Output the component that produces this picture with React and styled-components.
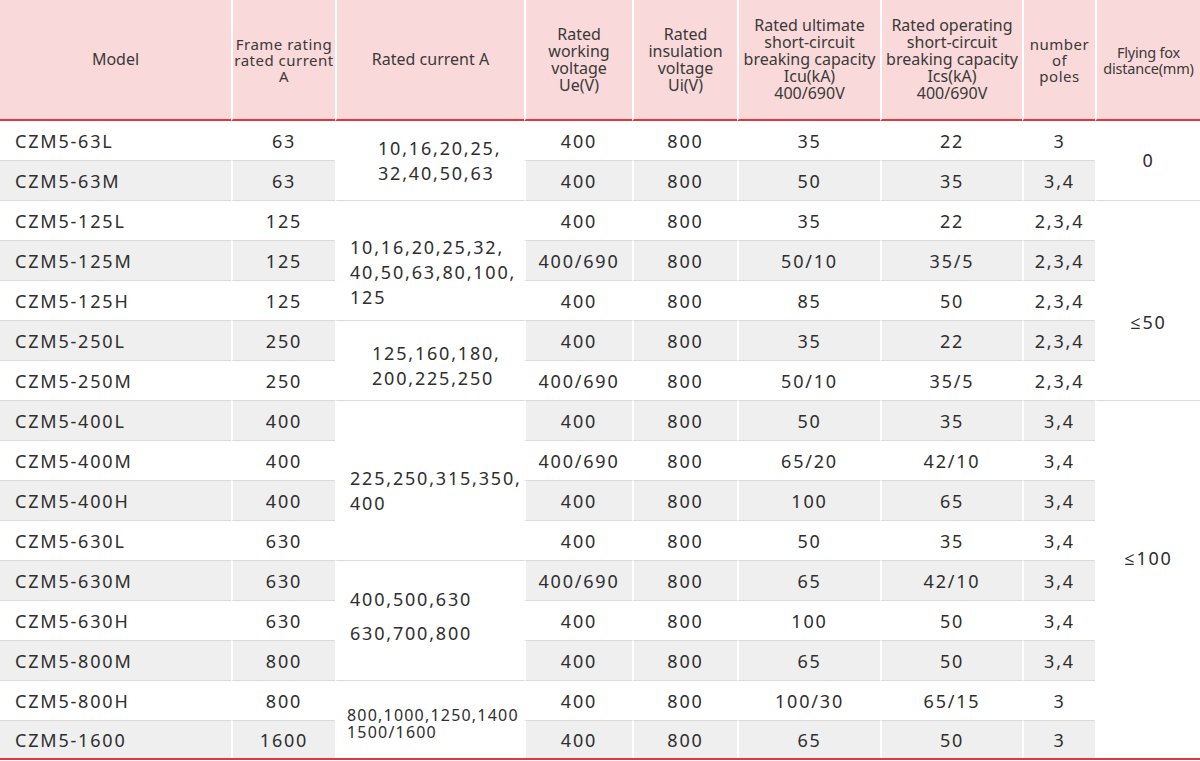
import React from "react";
import styled, { createGlobalStyle } from "styled-components";

const GlobalStyle = createGlobalStyle`
  html, body { margin: 0; padding: 0; background: #fff; }
  body { font-family: "Noto Sans", "Open Sans", "DejaVu Sans", sans-serif; color: #2e2e2e; }
`;

const Table = styled.table`
  width: 1200px;
  table-layout: fixed;
  border-collapse: separate;
  border-spacing: 0;
  border-bottom: 2px solid #e5363d;
`;

const Col = styled.col`
  width: ${(p) => p.$w}px;
`;

const Th = styled.th`
  height: 119px;
  padding: 0;
  background: #f9d9d9;
  color: #3a3a3a;
  font-weight: 400;
  font-size: ${(p) => p.$fs || 16}px;
  letter-spacing: ${(p) => p.$ls || 0}px;
  line-height: ${(p) => p.$lh || 17}px;
  text-align: center;
  vertical-align: middle;
  white-space: nowrap;
  border-left: 2px solid #fff;
  border-bottom: 2px solid #e5363d;
  &:first-child { border-left: none; }
`;

const Tr = styled.tr`
  height: ${(p) => p.$h}px;
`;

const Td = styled.td`
  padding: 0;
  font-size: 18px;
  letter-spacing: 1.8px;
  line-height: 22px;
  text-align: center;
  vertical-align: middle;
  white-space: nowrap;
  background: ${(p) => (p.$grey ? "#efefef" : "#fff")};
  border-left: 2px solid #fff;
  border-top: ${(p) => (p.$first ? "none" : "1px solid #dadada")};
  &:first-child { border-left: none; }
`;

const ModelTd = styled(Td)`
  text-align: left;
  padding-left: 15px;
`;

const SpanTd = styled(Td)`
  background: #fff;
  text-align: ${(p) => (p.$left ? "left" : "center")};
  padding: ${(p) => p.$pt || 0}px 0 ${(p) => p.$pb || 0}px ${(p) => p.$pl || 0}px;
  font-size: ${(p) => p.$fs || 18}px;
  letter-spacing: ${(p) => p.$ls ?? 1.8}px;
  line-height: ${(p) => p.$lh || 25}px;
`;

const cols = [231, 104, 189, 108, 105, 143, 142, 73, 105];

const headers = [
  { t: ["Model"] },
  { t: ["Frame rating", "rated current", "A"], lh: 16, fs: 15, ls: 0.5 },
  { t: ["Rated current A"] },
  { t: ["Rated", "working", "voltage", "Ue(V)"] },
  { t: ["Rated", "insulation", "voltage", "Ui(V)"] },
  { t: ["Rated ultimate", "short-circuit", "breaking capacity", "Icu(kA)", "400/690V"] },
  { t: ["Rated operating", "short-circuit", "breaking capacity", "Ics(kA)", "400/690V"] },
  { t: ["number", "of", "poles"], lh: 16, fs: 15, ls: 0.5 },
  { t: ["Flying fox", "distance(mm)"], lh: 16, fs: 14.5, ls: -0.2 },
];

const rated = {
  0: { span: 2, lines: ["10,16,20,25,", "32,40,50,63"], left: true, pl: 41 },
  2: { span: 3, lines: ["10,16,20,25,32,", "40,50,63,80,100,", "125"], left: true, pl: 13, pt: 24 },
  5: { span: 2, lines: ["125,160,180,", "200,225,250"], left: true, pl: 35, pt: 10 },
  7: { span: 4, lines: ["225,250,315,350,", "400"], left: true, pl: 13, pt: 21 },
  11: { span: 3, lines: ["400,500,630", "630,700,800"], left: true, pl: 13, pb: 10, lh: 34 },
  14: { span: 2, lines: ["800,1000,1250,1400", "1500/1600"], left: true, pl: 10, pt: 9, fs: 16, lh: 17, ls: 1.2 },
};

const flying = {
  0: { span: 2, text: "0" },
  2: { span: 5, text: "≤50", pt: 44 },
  7: { span: 9, text: "≤100", pb: 42 },
};

const rows = [
  ["CZM5-63L", "63", "400", "800", "35", "22", "3"],
  ["CZM5-63M", "63", "400", "800", "50", "35", "3,4"],
  ["CZM5-125L", "125", "400", "800", "35", "22", "2,3,4"],
  ["CZM5-125M", "125", "400/690", "800", "50/10", "35/5", "2,3,4"],
  ["CZM5-125H", "125", "400", "800", "85", "50", "2,3,4"],
  ["CZM5-250L", "250", "400", "800", "35", "22", "2,3,4"],
  ["CZM5-250M", "250", "400/690", "800", "50/10", "35/5", "2,3,4"],
  ["CZM5-400L", "400", "400", "800", "50", "35", "3,4"],
  ["CZM5-400M", "400", "400/690", "800", "65/20", "42/10", "3,4"],
  ["CZM5-400H", "400", "400", "800", "100", "65", "3,4"],
  ["CZM5-630L", "630", "400", "800", "50", "35", "3,4"],
  ["CZM5-630M", "630", "400/690", "800", "65", "42/10", "3,4"],
  ["CZM5-630H", "630", "400", "800", "100", "50", "3,4"],
  ["CZM5-800M", "800", "400", "800", "65", "50", "3,4"],
  ["CZM5-800H", "800", "400", "800", "100/30", "65/15", "3"],
  ["CZM5-1600", "1600", "400", "800", "65", "50", "3"],
];

function Lines({ lines }) {
  return lines.map((l, i) => (
    <React.Fragment key={i}>
      {i > 0 && <br />}
      {l}
    </React.Fragment>
  ));
}

export default function App() {
  return (
    <>
      <GlobalStyle />
      <Table>
        <colgroup>
          {cols.map((w, i) => (
            <Col key={i} $w={w} />
          ))}
        </colgroup>
        <thead>
          <tr>
            {headers.map((h, i) => (
              <Th key={i} $lh={h.lh} $fs={h.fs} $ls={h.ls}>
                <Lines lines={h.t} />
              </Th>
            ))}
          </tr>
        </thead>
        <tbody>
          {rows.map((r, i) => {
            const grey = i % 2 === 1;
            const first = i === 0;
            const rc = rated[i];
            const ff = flying[i];
            return (
              <Tr key={i} $h={first ? 39 : i === rows.length - 1 ? 38 : 40}>
                <ModelTd $grey={grey} $first={first}>{r[0]}</ModelTd>
                <Td $grey={grey} $first={first}>{r[1]}</Td>
                {rc && (
                  <SpanTd
                    rowSpan={rc.span}
                    $first={first}
                    $left={rc.left}
                    $pl={rc.pl}
                    $pt={rc.pt}
                    $pb={rc.pb}
                    $lh={rc.lh}
                    $fs={rc.fs}
                    $ls={rc.ls}
                  >
                    <Lines lines={rc.lines} />
                  </SpanTd>
                )}
                {r.slice(2).map((c, j) => (
                  <Td key={j} $grey={grey} $first={first}>{c}</Td>
                ))}
                {ff && (
                  <SpanTd rowSpan={ff.span} $first={first} $pt={ff.pt} $pb={ff.pb}>
                    {ff.text}
                  </SpanTd>
                )}
              </Tr>
            );
          })}
        </tbody>
      </Table>
    </>
  );
}
